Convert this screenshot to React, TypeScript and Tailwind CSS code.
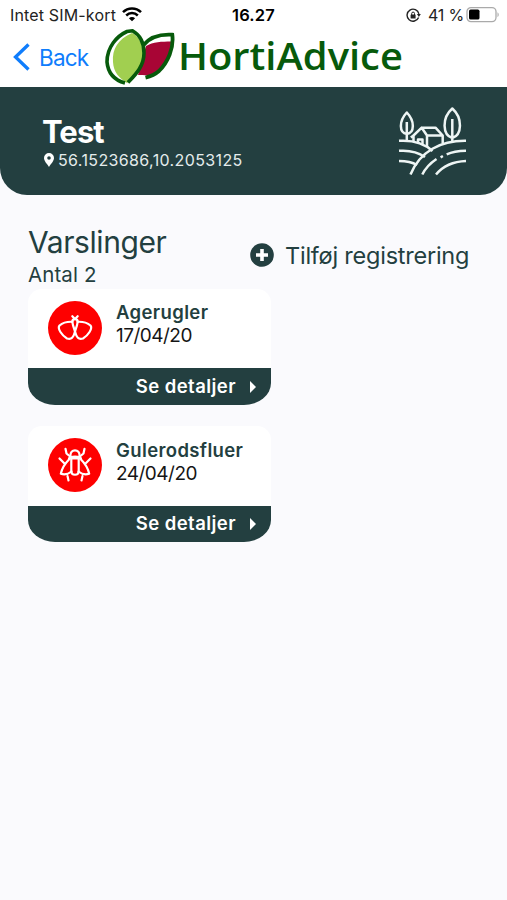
import React from "react";

const FONT = "font-['Inter','Liberation_Sans',sans-serif]";

function Wifi() {
  return (
    <svg className="ml-[6px] h-[15px] w-[20px]" viewBox="0 0 20 15" fill="none" stroke="#000" strokeWidth="2.5">
      <path d="M1 5.2C6 .2 14 .2 19 5.2" />
      <path d="M4.2 8.5c3.3-3.2 8.3-3.2 11.6 0" />
      <path d="M10 14.2 6.9 11.2c1.8-1.6 4.4-1.6 6.2 0z" fill="#000" stroke="none" />
    </svg>
  );
}

function StatusBar() {
  return (
    <div className="flex h-[28px] items-center pl-[10px] pt-px text-[16px] leading-none text-[#222]">
      <div className="flex w-[222px] items-center">
        <span className="tracking-[0.01em]">Intet SIM-kort</span>
        <Wifi />
      </div>
      <span className="w-[174px] pt-px text-[16.5px] font-semibold tracking-[0.01em] text-black">16.27</span>
      <svg className="mt-px h-[15px] w-[15px]" viewBox="0 0 15 15" fill="none" stroke="#222" strokeWidth="1.4">
        <path d="M12.6 9.5A6 6 0 1 1 12.9 5.8" />
        <path d="M10.9 6h3.9l-1.9 3z" fill="#222" stroke="none" />
        <rect x="4.6" y="6.6" width="5" height="4" rx=".5" fill="#222" stroke="none" />
        <path d="M5.7 7V5.500a1.4 1.4 0 0 1 2.8 0V7" strokeWidth="1" />
      </svg>
      <span className="ml-[7px] w-[38px] whitespace-nowrap tracking-[-0.01em]">41 %</span>
      <svg className="-mt-px h-[17px] w-[34px]" viewBox="0 0 34 17" fill="none">
        <rect x="1" y="1.6" width="29" height="14" rx="4" stroke="#aaa" strokeWidth="1.3" />
        <rect x="3" y="3.6" width="10.5" height="10" rx="1.7" fill="#000" />
        <path d="M31.5 6.2c1.6.7 1.6 4.1 0 4.8z" fill="#aaa" />
      </svg>
    </div>
  );
}

function Leaves() {
  return (
    <svg className="ml-[16px] mt-px h-[56px] w-[70px]" viewBox="0 0 70 56">
      <path d="M38 16C45 7 56 5 67.300 5.500C69 18 64 34 54 43C49 47 43 49 34 47Z" fill="#fff" />
      <path d="M41 17C48 13 57 12.500 66 12.500C66 24 61 38 50 44.500C45 47.500 40 46 33 46Z" fill="#a80535" />
      <path d="M38.500 16C45 8 56 5 67.300 5.700C69 19 63 33 54 42C50 45.500 45 47.500 40.500 48.600" fill="none" stroke="#075a0b" strokeWidth="3.800" />
      <path d="M27 2C13 5 1 18 2 33C3 44 11 52 22 54C34 45 40 35 38.500 22C37.500 12 33 6 27 2Z" fill="#fff" />
      <path d="M27 4C13 10 7 20 8 33C8.500 43 14 49 22 54C34 45 40 35 38.500 22C37 13 33 7 27 4Z" fill="#a1cf50" />
      <path d="M20 54C9 51 3 44 2 33C2 18 12 7 22 2.500L27.500 1.800C35 6 39 14 39 24C39 37 31 45 23 53.500" fill="none" stroke="#075a0b" strokeWidth="3.600" />
    </svg>
  );
}

function NavBar() {
  return (
    <div className="flex h-[58.500px] items-start pl-[13px]">
      <svg className="mt-[15px] h-[28px] w-[18px]" viewBox="0 0 18 28" fill="none" stroke="#0f7dfc" strokeWidth="3.300">
        <path d="M15.500 1.500 2.500 14l13 12.500" />
      </svg>
      <span className="ml-[8px] mt-[18px] w-[50px] whitespace-nowrap text-[22.500px] leading-[24px] tracking-[-0.035em] text-[#0f7dfc]">Back</span>
      <Leaves />
      <span className="ml-[2.500px] mt-[5px] origin-left scale-x-[1.05] whitespace-nowrap font-['Open_Sans','Noto_Sans',sans-serif] text-[38px] font-semibold leading-[44px] text-[#075a0b]">HortiAdvice</span>
    </div>
  );
}

function Farm() {
  return (
    <svg className="h-[70px] w-[70px]" viewBox="0 0 70 70" fill="none" stroke="#eef5f4" strokeWidth="2.500" strokeLinejoin="round">
      <path d="M8.800 35V16M8.800 28C1 27 .8 15 8.800 6.500C17 15 16.700 27 8.800 28Z" />
      <path d="M54.300 35V13M54.300 32C44.500 29 43.500 12 54.300 2.500C65 12 64 29 54.300 32Z" />
      <path d="M15.500 36V29.500L23.700 21.700 29 29.500V41M23.700 21.700H37.500L44.700 29.500V37.500M29 29.500H44.700M15.500 29.500L12.800 31.500M20 36.500V33.500H24.500V38" />
      <path d="M1 34.800C14 34 26 37 34.500 45M1 44.800C12 44 20 46 27 51M1 55C8 55 14 56 19 59" />
      <path d="M12.500 68.500C22 45 43 34.500 68 34.800" />
      <path d="M24.300 68.500C28 61 32.500 57 38.500 53M48.700 48.300C54 46 60 45 68 44.800M42.600 51.300L44.900 50" />
      <path d="M38 68.500C45 60 55 55.500 68 55" />
    </svg>
  );
}

function FieldHeader() {
  return (
    <header className="flex h-[108px] items-start justify-between rounded-b-[27px] bg-[#233f40] pl-[42px] pr-[39px] text-white">
      <div className="pt-[27px]">
        <h1 className="text-[31px] font-bold leading-[36px] tracking-[-0.03em]">Test</h1>
        <p className="mt-[1.500px] flex items-center text-[16px] leading-[18px] text-[#e4ecec]">
          <svg className="ml-[2px] mr-[4px] h-[14px] w-[10px]" viewBox="0 0 10 14">
            <path d="M5 0a5 5 0 0 0-5 5c0 3 2.500 5 5 9 2.500-4 5-6 5-9a5 5 0 0 0-5-5Zm0 3.200a1.800 1.800 0 1 1 0 3.600 1.800 1.800 0 0 1 0-3.600Z" fill="#fff" />
          </svg>
          <span className="tracking-[0.023em]">56.1523686,10.2053125</span>
        </p>
      </div>
      <div className="mt-[19.500px]"><Farm /></div>
    </header>
  );
}

function Moth() {
  return (
    <svg className="h-[54px] w-[54px]" viewBox="0 0 54 54" fill="none" stroke="#fff" strokeWidth="2.200" strokeLinejoin="round" strokeLinecap="round">
      <path d="M24.300 15.200 27 18 29.700 15.200M24.300 20.800C24.300 17.300 29.700 17.300 29.700 20.800" />
      <path d="M24.300 20.800C20 20.600 15 21.500 11.500 24.500C9 27.500 14 34.500 19 37.500C23.500 39 25.500 36.500 27 30.500C28 27.500 29.300 24 29.700 20.800" />
      <path d="M29.700 20.800C34 20.600 39 21.500 42.500 24.500C45 27.500 40 34.500 35 37.500C30.500 39 28.500 36.500 27 30.500C26 27.500 24.700 24 24.300 20.800" />
    </svg>
  );
}

function Fly() {
  return (
    <svg className="h-[54px] w-[54px]" viewBox="0 0 54 54" fill="none" stroke="#fff" strokeWidth="2.200" strokeLinejoin="round" strokeLinecap="round">
      <path d="M22.500 18C21.500 10.500 32.500 10.500 31.500 18" />
      <path d="M21 20.500C22 17.800 32 17.800 33 20.500Z" />
      <path d="M23.300 21V33.500C23.500 37.800 30.500 37.800 30.700 33.500V21" />
      <path d="M21 21.500C17 25.500 14 30 12.800 35.800C17 37 20.500 36 23.500 33.500M33 21.500C37 25.500 40 30 41.200 35.800C37 37 33.500 36 30.500 33.500" />
      <path d="M17.500 10.800 18.500 15.500 21.500 18M36.500 10.800 35.500 15.500 32.500 18M11.500 20.500 16.500 25.500M42.500 20.500 37.500 25.500M19.500 38 20.500 42.500M34.500 38 33.500 42.500" />
    </svg>
  );
}

type AlertProps = { name: string; date: string; children: React.ReactNode };

function AlertCard({ name, date, children }: AlertProps) {
  return (
    <article className="h-[116px] w-[243px] overflow-hidden bg-white [border-radius:14px_14px_27px_27px/14px_14px_22px_22px]">
      <div className="flex h-[79.500px] pl-[20px] pt-[12px]">
        <div className="h-[54px] w-[54px] shrink-0 rounded-full bg-[#fe0000]">{children}</div>
        <div className="ml-[14px] whitespace-nowrap pt-[0.500px]">
          <h3 className="text-[18.500px] font-semibold leading-[23px] tracking-[0.02em] text-[#233f40]">{name}</h3>
          <p className="text-[19px] leading-[23px] tracking-[-0.027em] text-[#151515]">{date}</p>
        </div>
      </div>
      <div className="flex h-[36.500px] items-center justify-end bg-[#233f40] pr-[15px] pt-px text-white">
        <span className="text-[18.500px] font-semibold tracking-[0.024em]">Se detaljer</span>
        <svg className="ml-[14px] h-[12px] w-[6px]" viewBox="0 0 6 12"><path d="M0 0 6 6 0 12Z" fill="#fff" /></svg>
      </div>
    </article>
  );
}

export default function App() {
  return (
    <div className={"h-[900px] w-[507px] overflow-hidden bg-[#fafafd] " + FONT}>
      <div className="bg-white">
        <StatusBar />
        <NavBar />
      </div>
      <FieldHeader />
      <main className="pl-[28px] pt-[29px] text-[#233f40]">
        <div className="flex">
          <div className="w-[222px]">
            <h2 className="text-[30px] leading-[36px] tracking-[-0.014em]">Varslinger</h2>
            <p className="text-[20.500px] leading-[29px] tracking-[0.005em]">Antal 2</p>
          </div>
          <button className="flex h-[62px] items-center whitespace-nowrap">
            <svg className="h-[24px] w-[24px]" viewBox="0 0 24 24">
              <circle cx="12" cy="12" r="11.800" fill="#233f40" />
              <path d="M12 6v12M6 12h12" stroke="#fff" strokeWidth="3.600" />
            </svg>
            <span className="ml-[11px] mt-[2px] text-[23.500px] tracking-[-0.01em]">Tilføj registrering</span>
          </button>
        </div>
        <div className="flex flex-col gap-[21.500px]">
          <AlertCard name="Agerugler" date="17/04/20"><Moth /></AlertCard>
          <AlertCard name="Gulerodsfluer" date="24/04/20"><Fly /></AlertCard>
        </div>
      </main>
    </div>
  );
}
